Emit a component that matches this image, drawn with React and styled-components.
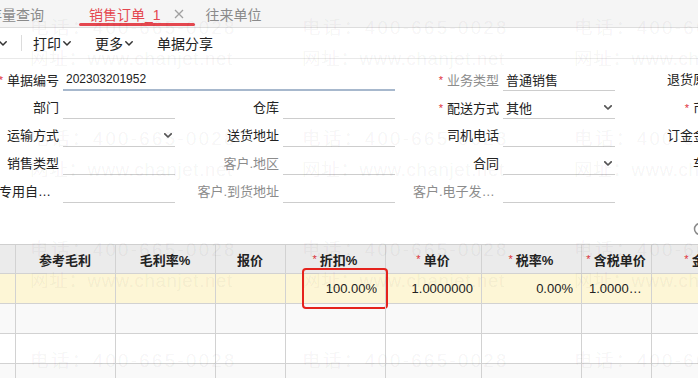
import React from 'react';
import styled, { createGlobalStyle, css } from 'styled-components';

const GlobalStyle = createGlobalStyle`
  html, body { margin: 0; padding: 0; background: #fff; }
  body { font-family: "Liberation Sans", "Noto Sans CJK SC", sans-serif; color: #333; }
  * { box-sizing: border-box; }
`;

const Viewport = styled.div`
  position: relative;
  width: 698px;
  height: 378px;
  overflow: hidden;
  background: #fff;
`;

/* ---------- tabs ---------- */
const TabBar = styled.div`
  display: flex;
  height: 28px;
  margin-left: -36px;
  background: #f5f5f5;
  border-bottom: 1px solid #dddddd;
`;

const Tab = styled.div`
  position: relative;
  display: flex;
  align-items: center;
  height: 27px;
  padding: 0 12px 0 10px;
  font-size: 14px;
  white-space: nowrap;
  color: ${(p) => (p.$active ? '#e4474f' : '#8a8a8a')};
  & + &::before {
    content: '';
    position: absolute;
    left: -1px;
    top: 5px;
    bottom: 5px;
    width: 1px;
    background: #dadada;
  }
  ${(p) =>
    p.$active &&
    css`
      &::after {
        content: '';
        position: absolute;
        left: 0;
        right: 1px;
        bottom: 1px;
        height: 3px;
        border-radius: 2px;
        background: #e4474f;
      }
    `}
`;

const Close = styled.span`
  display: flex;
  margin-left: 13px;
  visibility: ${(p) => (p.$show ? 'visible' : 'hidden')};
`;

const CloseIcon = () => (
  <svg width="10" height="10" viewBox="0 0 10 10">
    <path d="M1 1L9 9M9 1L1 9" stroke="#a0a0a0" strokeWidth="1.3" fill="none" />
  </svg>
);

/* ---------- toolbar ---------- */
const Toolbar = styled.div`
  display: flex;
  align-items: center;
  height: 31px;
  margin-left: -31px;
  border-bottom: 1px solid #e9e9e9;
`;

const ToolGroup = styled.div`
  display: flex;
  align-items: center;
  gap: 24px;
`;

const ToolItem = styled.div`
  display: flex;
  align-items: center;
  gap: 2px;
  font-size: 14px;
  color: #222;
  white-space: nowrap;
`;

const Divider = styled.div`
  width: 1px;
  height: 16px;
  margin: 0 11px 0 14px;
  background: #dcdcdc;
`;

const Chevron = ({ size = 8, color = '#333', w = 1.5 }) => (
  <svg width={size} height={size * 0.625} viewBox="0 0 8 5">
    <polyline points="0.8,0.8 4,4 7.2,0.8" fill="none" stroke={color} strokeWidth={w} strokeLinecap="round" strokeLinejoin="round" />
  </svg>
);

/* ---------- form ---------- */
const Form = styled.div`
  display: grid;
  grid-template-columns: repeat(4, 202px);
  column-gap: 18px;
  row-gap: 6px;
  margin-left: -27px;
  padding-top: 10px;
`;

const Field = styled.div`
  display: flex;
  height: 22px;
  grid-column: ${(p) => (p.$span ? `span ${p.$span}` : 'auto')};
`;

const Label = styled.div`
  flex: 0 0 90px;
  padding-right: 4px;
  font-size: 13px;
  line-height: 22px;
  text-align: right;
  white-space: nowrap;
  overflow: hidden;
  text-overflow: ellipsis;
  color: ${(p) => (p.$muted ? '#8c8c8c' : '#222')};
`;

const Req = styled.span`
  color: #e0323c;
  font-size: 11px;
  margin-right: 4px;
  vertical-align: 1px;
`;

const Input = styled.div`
  flex: 1;
  display: flex;
  align-items: center;
  justify-content: space-between;
  padding: 0 3px 0 3px;
  font-size: ${(p) => (p.$num ? '12px' : '13px')};
  color: #222;
  white-space: nowrap;
  border-bottom: ${(p) => (p.$focus ? '2px solid #a7b8cd' : '1px solid #cdcdcd')};
`;

/* ---------- icon row ---------- */
const IconRow = styled.div`
  display: flex;
  justify-content: flex-end;
  align-items: flex-end;
  height: 41px;
  margin-right: -16px;
  padding: 0 7px 8px 0;
`;

/* ---------- table ---------- */
const cols = '100px 100px 100px 70px 100px 96px 100px 70px 100px';

const Table = styled.div`
  margin-left: -84px;
  border-top: 1px solid #cfcfcf;
`;

const Row = styled.div`
  display: grid;
  grid-template-columns: ${cols};
  height: ${(p) => (p.$head ? '29px' : '30px')};
  border-bottom: 1px solid #d2d2d2;
  background: ${(p) => p.$bg};
`;

const Cell = styled.div`
  position: relative;
  display: flex;
  align-items: center;
  justify-content: ${(p) => (p.$head ? 'center' : 'flex-end')};
  padding: 0 8px 0 7px;
  border-right: 1px solid #d2d2d2;
  font-size: 13px;
  font-weight: ${(p) => (p.$head ? 700 : 400)};
  color: #222;
  white-space: nowrap;
  overflow: ${(p) => (p.$mark ? 'visible' : 'hidden')};
  min-width: 0;
`;

const CellText = styled.span`
  display: block;
  overflow: hidden;
  text-overflow: ellipsis;
  white-space: nowrap;
`;

const HeadReq = styled.span`
  color: #e0323c;
  font-size: 11px;
  font-weight: 400;
  margin-right: 3px;
  align-self: flex-start;
  margin-top: 8px;
`;

const Highlight = styled.div`
  position: absolute;
  left: 16px;
  right: -3px;
  top: -6px;
  bottom: -6px;
  border: 2px solid #e5231d;
  border-radius: 4px;
  pointer-events: none;
`;

/* ---------- watermark ---------- */
const Watermark = styled.div`
  position: absolute;
  inset: 0;
  display: grid;
  grid-template-columns: repeat(3, 272px);
  grid-auto-rows: 111px;
  padding: 12px 0 0 30px;
  pointer-events: none;
  z-index: 5;
`;

const Mark = styled.div`
  font-size: 18.5px;
  line-height: 31px;
  color: rgba(0, 0, 0, 0.055);
  white-space: nowrap;
`;

const MarkLine = styled.div`
  letter-spacing: ${(p) => p.$ls}px;
`;

const formRows = [
  [
    { label: '单据编号', req: true, value: '202303201952', span: 2, focus: true, num: true },
    { label: '业务类型', req: true, muted: true, value: '普通销售' },
    { label: '退货原因' },
  ],
  [
    { label: '部门' },
    { label: '仓库' },
    { label: '配送方式', req: true, value: '其他', select: true },
    { label: '币种', req: true },
  ],
  [
    { label: '运输方式', select: true },
    { label: '送货地址' },
    { label: '司机电话' },
    { label: '订金金额' },
  ],
  [
    { label: '销售类型' },
    { label: '客户.地区', muted: true },
    { label: '合同', select: true },
    { label: '车辆' },
  ],
  [
    { label: '表头专用自定义项1' },
    { label: '客户.到货地址', muted: true },
    { label: '客户.电子发票邮箱', muted: true },
    { label: '' },
  ],
];

const headers = [
  { t: '数量' },
  { t: '参考毛利' },
  { t: '毛利率%' },
  { t: '报价' },
  { t: '折扣%', req: true },
  { t: '单价', req: true },
  { t: '税率%', req: true },
  { t: '含税单价', req: true },
  { t: '金额', req: true },
];

const dataRow = ['', '', '', '', '100.00%', '1.0000000', '0.00%', '1.0000000', ''];

export default function App() {
  return (
    <>
      <GlobalStyle />
      <Viewport>
        <TabBar>
          <Tab>
            现存量查询
            <Close>
              <CloseIcon />
            </Close>
          </Tab>
          <Tab $active>
            销售订单_1
            <Close $show>
              <CloseIcon />
            </Close>
          </Tab>
          <Tab>
            往来单位
            <Close>
              <CloseIcon />
            </Close>
          </Tab>
        </TabBar>

        <Toolbar>
          <ToolItem>
            保存
            <Chevron />
          </ToolItem>
          <Divider />
          <ToolGroup>
            <ToolItem>
              打印
              <Chevron />
            </ToolItem>
            <ToolItem>
              更多
              <Chevron />
            </ToolItem>
            <ToolItem>单据分享</ToolItem>
          </ToolGroup>
        </Toolbar>

        <Form>
          {formRows.flat().map((f, i) => (
            <Field key={i} $span={f.span}>
              <Label $muted={f.muted}>
                {f.req && <Req>*</Req>}
                {f.label}
              </Label>
              <Input $focus={f.focus} $num={f.num}>
                <span>{f.value || ''}</span>
                {f.select && <Chevron size={8} color="#555" w={1.7} />}
              </Input>
            </Field>
          ))}
        </Form>

        <IconRow>
          <svg width="14" height="14" viewBox="0 0 14 14">
            <circle cx="7" cy="7" r="5.5" fill="none" stroke="#8a8a8a" strokeWidth="1.5" />
          </svg>
        </IconRow>

        <Table>
          <Row $head $bg="#ebebeb">
            {headers.map((h, i) => (
              <Cell key={i} $head>
                {h.req && <HeadReq>*</HeadReq>}
                {h.t}
              </Cell>
            ))}
          </Row>
          <Row $bg="#fdf6d6">
            {dataRow.map((v, i) => (
              <Cell key={i} $mark={i === 4}>
                <CellText>{v}</CellText>
                {i === 4 && <Highlight />}
              </Cell>
            ))}
          </Row>
          {['#f9f9f9', '#ffffff', '#f9f9f9'].map((bg, r) => (
            <Row key={r} $bg={bg}>
              {dataRow.map((_, i) => (
                <Cell key={i} />
              ))}
            </Row>
          ))}
        </Table>

        <Watermark>
          {Array.from({ length: 12 }).map((_, i) => (
            <Mark key={i}>
              <MarkLine $ls={2.4}>电话：400-665-0028</MarkLine>
              <MarkLine $ls={0.7}>网址：www.chanjet.net</MarkLine>
            </Mark>
          ))}
        </Watermark>
      </Viewport>
    </>
  );
}
